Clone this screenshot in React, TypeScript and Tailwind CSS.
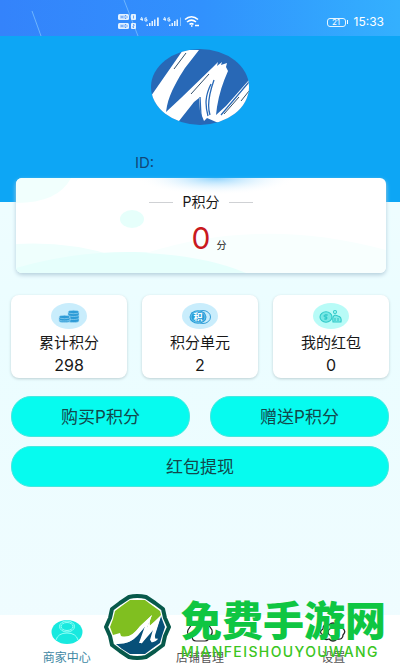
import type { ReactNode } from "react";

function StatusBar() {
  return (
    <div className="relative flex h-9 items-center justify-between bg-gradient-to-r from-[#3483fb] via-[#3191fd] to-[#34b0fe] pt-2 pr-4 pl-[118px] text-white">
      <svg className="absolute inset-0 h-9 w-40" viewBox="0 0 160 36" stroke="#6db5fd" fill="none" aria-hidden="true">
        <path d="M32 11 41 36M124 0 138 36" />
      </svg>
      <svg className="relative h-4 w-[82px]" viewBox="0 0 82 16" fill="#e3f2ff" aria-hidden="true">
        <rect y="0" width="11" height="6" rx="1.500" />
        <rect x="13" y="0" width="5" height="6" rx="1" />
        <rect y="9" width="11" height="6" rx="1.500" />
        <rect x="13" y="9" width="5" height="6" rx="1" />
        <path d="M3 1.500v3M5 1.500v3M3 3h2M7 1.500v3h1l1-1v-1l-1-1zM3 10.500v3M5 10.500v3M3 12h2M7 10.500v3h1l1-1v-1l-1-1zM15.500 1.500v3M15 10.500h1v1.500h-1v1.500h1" stroke="#3485f5" strokeWidth=".7" fill="none" />
        <path d="M24 3 22.500 5.500h2.500M24.200 4v3M29 4h-2v3h2V5.500h-1M47 3 45.500 5.500H48M47.200 4v3M52 4h-2v3h2V5.500h-1" stroke="#e3f2ff" strokeWidth="1" fill="none" />
        <path d="M28.500 10.500H30V12h-1.500zM31 9h1.500v3H31zM33.500 7H35v5h-1.500zM36 5.500h1.500V12H36zM39 3.500h1.800V12H39zM51 10.500h1.500V12H51zM53.500 9H55v3h-1.500zM56 7h1.500v5H56zM58.500 5.500H60V12h-1.500z" />
        <path d="M62.500 3.500V12" stroke="#8ac3fd" strokeWidth="1" />
        <path d="M67 5.500c4-3.500 9-3.500 13 0M69 8c3-2.500 6-2.500 9 0M71.500 10.300c1.500-1 2.500-1 4 0M73 12h1.500M77 11.500h4" stroke="#fff" strokeWidth="1.600" fill="none" />
      </svg>
      <div className="flex items-center gap-1 text-[12px] leading-4">
        <span className="relative flex h-[9px] w-[19px] items-center justify-center rounded-[3px] border border-[#e8f6ff] text-[8px] leading-none after:absolute after:-right-[3px] after:h-1 after:w-px after:bg-white">
          21
        </span>
        <span className="ml-1">15:33</span>
      </div>
    </div>
  );
}

function Avatar() {
  return (
    <svg className="h-[76px] w-[98px]" viewBox="0 0 98 76" role="img" aria-label="avatar">
      <defs>
        <clipPath id="avatar-oval"><ellipse cx="49" cy="38" rx="49" ry="38" /></clipPath>
      </defs>
      <g clipPath="url(#avatar-oval)">
        <rect width="98" height="76" fill="#2868b6" />
        <path d="M0 47 32 1H48L34 19C27 30 19 43 16 57L15 63 30 49 61 19 67 13 66 17 71 13 70 16 76 14 75 18 77 22C72 33 68 45 66 58L65 66 75 57 98 31V60L72 76 56 69 53 72 49 62 48 49 43 53 28 72H0Z" fill="#fff" />
        <path d="M49 48 50 67M60 35C54 47 54 56 57 67M63 31C58 45 56 57 59 66M70 66 98 33" stroke="#2868b6" strokeWidth="1.300" fill="none" />
        <path d="M23 20 35 4M40 45 58 25M73 65 88 48M90 52 98 42" stroke="#193a59" strokeWidth=".9" fill="none" />
      </g>
    </svg>
  );
}

function PointsCard() {
  return (
    <section className="relative z-10 mr-3.5 ml-4 -mt-6 h-[95px] overflow-hidden rounded-md bg-white shadow-[0_2px_4px_#b5cfdc]">
      <svg className="absolute inset-0 h-full w-full" viewBox="0 0 370 95" preserveAspectRatio="none" aria-hidden="true">
        <defs>
          <radialGradient id="card-glow">
            <stop offset="0" stopColor="#8fd3fc" />
            <stop offset="1" stopColor="#ffffff" stopOpacity="0" />
          </radialGradient>
        </defs>
        <path d="M0 0H55Q42 25 0 25Z" fill="#f1fffd" />
        <ellipse cx="116" cy="41" rx="12" ry="9" fill="#e6fffb" />
        <path d="M0 66Q57 63 104 80T228 95H0Z" fill="#effffd" />
        <path d="M0 90Q58 73 119 74Q190 75 233 95H0Z" fill="#e6fffc" />
        <path d="M130 75Q245 38 370 72V95H230Q190 78 130 75Z" fill="#f8fffe" />
        <ellipse cx="200" cy="0" rx="80" ry="17" fill="url(#card-glow)" />
      </svg>
      <div className="relative flex flex-col items-center pt-3.5">
        <h1 className="flex items-center gap-2.5 text-[14px] leading-5">
          <span className="h-px w-6 bg-[#cfd1d4]" />
          P积分
          <span className="h-px w-6 bg-[#cfd1d4]" />
        </h1>
        <p className="ml-4 flex items-baseline gap-1.5 pt-2">
          <span className="text-[30px] leading-9 text-[#c9191e]">0</span>
          <span className="text-[10px]">分</span>
        </p>
      </div>
    </section>
  );
}

function CoinsIcon() {
  return (
    <svg className="h-[26px] w-9" viewBox="0 0 36 26" aria-hidden="true">
      <ellipse cx="18" cy="13" rx="18" ry="13" fill="#c9edfc" />
      <g fill="#2d9bd7" stroke="#a8dcf5" strokeWidth=".6">
        <path d="M17 9v9c0 2 11 2 11 0V9z" /><ellipse cx="22.500" cy="9" rx="5.500" ry="1.700" />
        <path d="M17 12c0 2 11 2 11 0M17 15c0 2 11 2 11 0" fill="none" />
        <path d="M8 14v4c0 2 11 2 11 0v-4z" /><ellipse cx="13.500" cy="14" rx="5.500" ry="1.700" />
        <path d="M8 16.500c0 2 11 2 11 0" fill="none" />
      </g>
    </svg>
  );
}

function UnitIcon() {
  return (
    <span className="relative flex h-[26px] w-9 items-center justify-center">
      <svg className="absolute inset-0 h-full w-full" viewBox="0 0 36 26" aria-hidden="true">
        <ellipse cx="18" cy="13" rx="18" ry="13" fill="#c9edfc" />
        <ellipse cx="21" cy="14" rx="7.500" ry="6.500" fill="#c9edfc" stroke="#329dd7" />
        <ellipse cx="16" cy="14" rx="8.500" ry="6.800" fill="#299fd8" />
        <ellipse cx="16" cy="14" rx="7" ry="5.400" fill="none" stroke="#91d1f3" strokeWidth=".6" />
      </svg>
      <span className="relative pt-0.5 pr-1 text-[9px] leading-3 font-bold text-white">积</span>
    </span>
  );
}

function PacketIcon() {
  return (
    <svg className="h-[26px] w-9" viewBox="0 0 36 26" aria-hidden="true">
      <ellipse cx="18" cy="13" rx="18" ry="13" fill="#b8fbf7" />
      <g fill="none" stroke="#30c9c9" strokeWidth="1.100">
        <ellipse cx="13" cy="14" rx="6" ry="5.200" fill="#79e8e5" />
        <path d="M15 12h-3q-2 1 0 2h1q2 1 0 2h-2M13 11v6" />
        <circle cx="22" cy="9" r="1.500" />
        <path d="M20 19q-1-6 2-7l3 1q4 1 3 6zM22 15v3M25 15v3" fill="#83eae7" />
      </g>
    </svg>
  );
}

function Stat({ icon, label, value }: { icon: ReactNode; label: string; value: string }) {
  return (
    <div className="flex h-[83px] flex-col items-center rounded-lg bg-white pt-2 shadow-[0_1px_3px_#bcd0d3]">
      {icon}
      <dt className="mt-0.5 text-[15px] leading-6">{label}</dt>
      <dd className="text-base leading-5">{value}</dd>
    </div>
  );
}

function ActionButton({ children, wide = false }: { children: ReactNode; wide?: boolean }) {
  return (
    <button
      type="button"
      className={`h-[41px] rounded-[20px] border border-[#45e8df] bg-[#06fbef] text-[17px] leading-6 text-[#12484b] ${wide ? "col-span-2" : ""}`}
    >
      {children}
    </button>
  );
}

function NavItem({ label, active = false, children }: { label: string; active?: boolean; children: ReactNode }) {
  return (
    <a href="#" className={`flex flex-col items-center pt-[5px] text-xs leading-4 ${active ? "text-[#3e88a4]" : "text-[#555]"}`}>
      {children}
      <span className="mt-1.5">{label}</span>
    </a>
  );
}

function BottomNav() {
  return (
    <nav className="mt-auto grid h-[51px] grid-cols-3 bg-white">
      <NavItem label="商家中心" active>
        <svg className="h-6 w-8" viewBox="0 0 32 24" aria-hidden="true">
          <ellipse cx="16" cy="12" rx="15.500" ry="12" fill="#18e9df" />
          <g fill="none" stroke="#91fff7">
            <ellipse cx="16" cy="6.500" rx="7.500" ry="5.500" /><ellipse cx="16" cy="6.500" rx="6" ry="4" />
            <path d="M5 20q2-7 11-7t11 7" />
          </g>
        </svg>
      </NavItem>
      <NavItem label="店铺管理">
        <svg className="h-6 w-8" viewBox="0 0 32 24" fill="none" stroke="#222" strokeWidth="1.200" aria-hidden="true">
          <path d="M8 4 4 10q-2 5 4 6M24 4l4 6q1 5-3 6M8 4q8-3 16 0M8 16q0 5 4 5h9q4 0 4-5" />
        </svg>
      </NavItem>
      <NavItem label="设置">
        <svg className="h-6 w-8" viewBox="0 0 32 24" fill="none" stroke="#222" strokeWidth="1.300" aria-hidden="true">
          <path d="M12 5Q16 1 20 5 26 3 25 8 30 11 26 15 26 20 20 19 16 23 12 19 6 21 6 15 1 12 6 9 6 3 12 5Z" />
          <ellipse cx="16" cy="12" rx="5" ry="4" />
        </svg>
      </NavItem>
    </nav>
  );
}

function Watermark() {
  return (
    <div className="pointer-events-none absolute bottom-1.5 left-1/2 z-20 -ml-24 flex items-center gap-2.5">
      <svg className="h-[66px] w-[67px]" viewBox="0 0 67 66" aria-hidden="true">
        <path d="M25 3Q33 1 42 3L51 9 59 15 61 24 65 33 61 42 59 51 51 57 42 63Q33 65 25 63L16 57 8 51 6 42 2 33 6 24 8 15 16 9Z" fill="#fff" stroke="#07594b" strokeWidth="4" strokeLinejoin="round" />
        <path d="M26 6H41L49 12 56 17 57 21 46 32Q45 27 48 21L31 38Q25 47 9 41L6 33 9 25 11 17 19 11Z" fill="#80bf20" />
        <path d="M57 22 58 25 61 33 58 42 56 49 49 54 41 60H26L18 55 12 50Q25 51 34 41L45 28 37 50 51 34 47 48Q51 49 54 45 49 46 52 38Z" fill="#075078" />
        <path d="M9 41 16 39 17 42Q27 45 36 32L48 21 43 34 57 22 50 42Q49 47 54 44 49 50 46 46L50 32 38 49H35L41 32 33 42Q24 52 13 47Z" fill="#fff" />
      </svg>
      <div className="whitespace-nowrap pt-1">
        <p className="text-[41px] leading-[46px] font-black text-[#0fc642]">免费手游网</p>
        <p className="text-[14px] leading-4 font-medium tracking-widest text-[#3bc51e]">MIANFEISHOUYOUWANG</p>
      </div>
    </div>
  );
}

export default function App() {
  return (
    <div className="relative flex min-h-screen flex-col overflow-hidden bg-gradient-to-b from-[#f3fdff] via-[#ebfdff] to-[#f0fcff] font-['Inter','Noto_Sans_CJK_SC',sans-serif] text-[#171717]">
      <header>
        <StatusBar />
        <div className="flex h-[166px] flex-col items-center bg-[#0da6f5] pt-[13px]">
          <Avatar />
          <p className="mt-7 w-[130px] text-[15px] leading-5 text-[#124677]">ID:</p>
        </div>
      </header>
      <main className="pb-6">
        <PointsCard />
        <dl className="mt-[22px] grid grid-cols-3 gap-[15px] px-[11px]">
          <Stat icon={<CoinsIcon />} label="累计积分" value="298" />
          <Stat icon={<UnitIcon />} label="积分单元" value="2" />
          <Stat icon={<PacketIcon />} label="我的红包" value="0" />
        </dl>
        <div className="mt-[18px] grid grid-cols-2 gap-x-5 gap-y-[9px] px-[11px]">
          <ActionButton>购买P积分</ActionButton>
          <ActionButton>赠送P积分</ActionButton>
          <ActionButton wide>红包提现</ActionButton>
        </div>
      </main>
      <BottomNav />
      <Watermark />
    </div>
  );
}
